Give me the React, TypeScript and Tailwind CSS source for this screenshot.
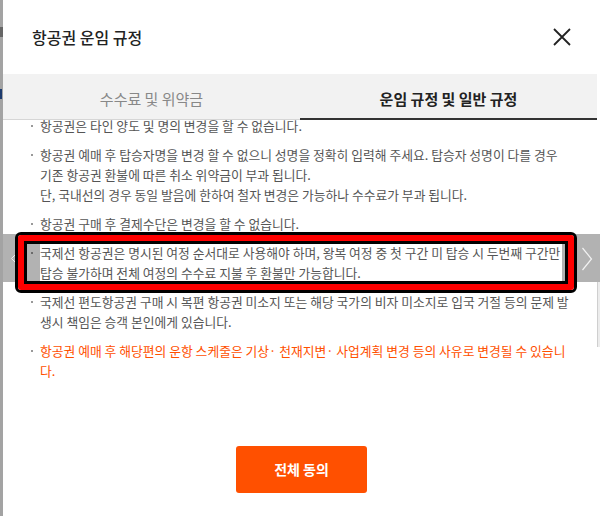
const ITEMS: { lines: string[]; accent?: boolean }[] = [
  { lines: ['항공권은 타인 양도 및 명의 변경을 할 수 없습니다.'] },
  {
    lines: [
      '항공권 예매 후 탑승자명을 변경 할 수 없으니 성명을 정확히 입력해 주세요. 탑승자 성명이 다를 경우',
      '기존 항공권 환불에 따른 취소 위약금이 부과 됩니다.',
      '단, 국내선의 경우 동일 발음에 한하여 철자 변경은 가능하나 수수료가 부과 됩니다.',
    ],
  },
  { lines: ['항공권 구매 후 결제수단은 변경을 할 수 없습니다.'] },
  {
    lines: [
      '국제선 항공권은 명시된 여정 순서대로 사용해야 하며, 왕복 여정 중 첫 구간 미 탑승 시 두번째 구간만',
      '탑승 불가하며 전체 여정의 수수료 지불 후 환불만 가능합니다.',
    ],
  },
  {
    lines: [
      '국제선 편도항공권 구매 시 복편 항공권 미소지 또는 해당 국가의 비자 미소지로 입국 거절 등의 문제 발',
      '생시 책임은 승객 본인에게 있습니다.',
    ],
  },
  {
    lines: ['항공권 예매 후 해당편의 운항 스케줄은 기상· 천재지변· 사업계획 변경 등의 사유로 변경될 수 있습니', '다.'],
    accent: true,
  },
];

export default function App() {
  return (
    <div className="relative w-[600px] h-[516px] overflow-hidden bg-[#a3a3a3] flex font-['Noto_Sans_CJK_KR',sans-serif]">
      {/* 배경 페이지 흔적 */}
      <div className="absolute left-0 top-[27px] w-[3px] h-[10px] bg-[#666]" />
      <div className="absolute left-0 top-[89px] w-[2px] h-[10px] bg-[#1d3b6e]" />

      {/* 모달 */}
      <div className="ml-[3px] flex-1 bg-white flex flex-col">
        {/* 헤더 */}
        <div className="h-[74px] flex items-center justify-between pl-[29px] pr-[29px]">
          <h1 className="text-[16px] font-medium text-[#222]">항공권 운임 규정</h1>
          <svg width="18" height="18" viewBox="0 0 18 18">
            <path d="M1 1 L17 17 M17 1 L1 17" fill="none" stroke="#222" strokeWidth="1.8" />
          </svg>
        </div>

        {/* 탭 */}
        <div className="mr-[3px] h-[46px] bg-[#f2f2f2] flex">
          <div className="flex-1 flex items-center justify-center pt-[5px] border-b border-[#d6d6d6] text-[15px] text-[#888]">
            수수료 및 위약금
          </div>
          <div className="flex-1 flex items-center justify-center pt-[6px] border-b-2 border-[#333] text-[15px] font-bold text-[#222]">
            운임 규정 및 일반 규정
          </div>
        </div>

        {/* 본문 */}
        <div className="h-[300px] overflow-hidden pl-[28px]">
          <ul className="-mt-[4px] flex flex-col gap-[9px]">
            {ITEMS.map((item, index) => (
              <li key={index} className="flex text-[12.8px] leading-[20px]">
                <span className="w-[9px] shrink-0 flex pt-[9px]">
                  <span className="block w-[2px] h-[2px] rounded-full bg-[#777]" />
                </span>
                <div className={item.accent ? 'text-[#ff5000]' : 'text-[#555]'}>
                  {item.lines.map((line, i) => (
                    <div key={i} className="whitespace-nowrap">
                      {line}
                    </div>
                  ))}
                </div>
              </li>
            ))}
          </ul>
        </div>

        {/* 버튼 */}
        <div className="flex justify-center pt-[26px]">
          <button className="w-[131px] h-[47px] rounded-[3px] bg-[#ff5000] text-white text-[14px] font-bold">
            전체 동의
          </button>
        </div>
      </div>

      {/* 슬라이더 화살표 (뒤 페이지) */}
      <div className="absolute left-[3px] top-[234px] w-[37px] h-[48px] bg-black/30" />
      <svg className="absolute left-[10px] top-[254px]" width="6" height="9" viewBox="0 0 6 9">
        <path d="M5 1 L1.5 4.5 L5 8" fill="none" stroke="#eee" strokeWidth="1" />
      </svg>
      <div className="absolute left-[562px] top-[234px] w-[38px] h-[48px] bg-black/30" />
      <svg className="absolute left-[581px] top-[247px]" width="12" height="24" viewBox="0 0 12 24">
        <path d="M1.5 1 L10.5 12 L1.5 23" fill="none" stroke="#f2f2f2" strokeWidth="1.2" />
      </svg>
      <div className="absolute left-[597px] top-[282px] w-[3px] h-[65px] bg-[#ececec] border-l border-[#cfcfcf]" />

      {/* 강조 박스 */}
      <div className="absolute left-[15px] top-[232px] w-[562px] h-[61px] border-[3px] border-black rounded-[6px]">
        <div className="h-full border-[6px] border-[#ff0000] rounded-[3px]">
          <div className="h-full border-[3px] border-black" />
        </div>
      </div>
    </div>
  );
}
